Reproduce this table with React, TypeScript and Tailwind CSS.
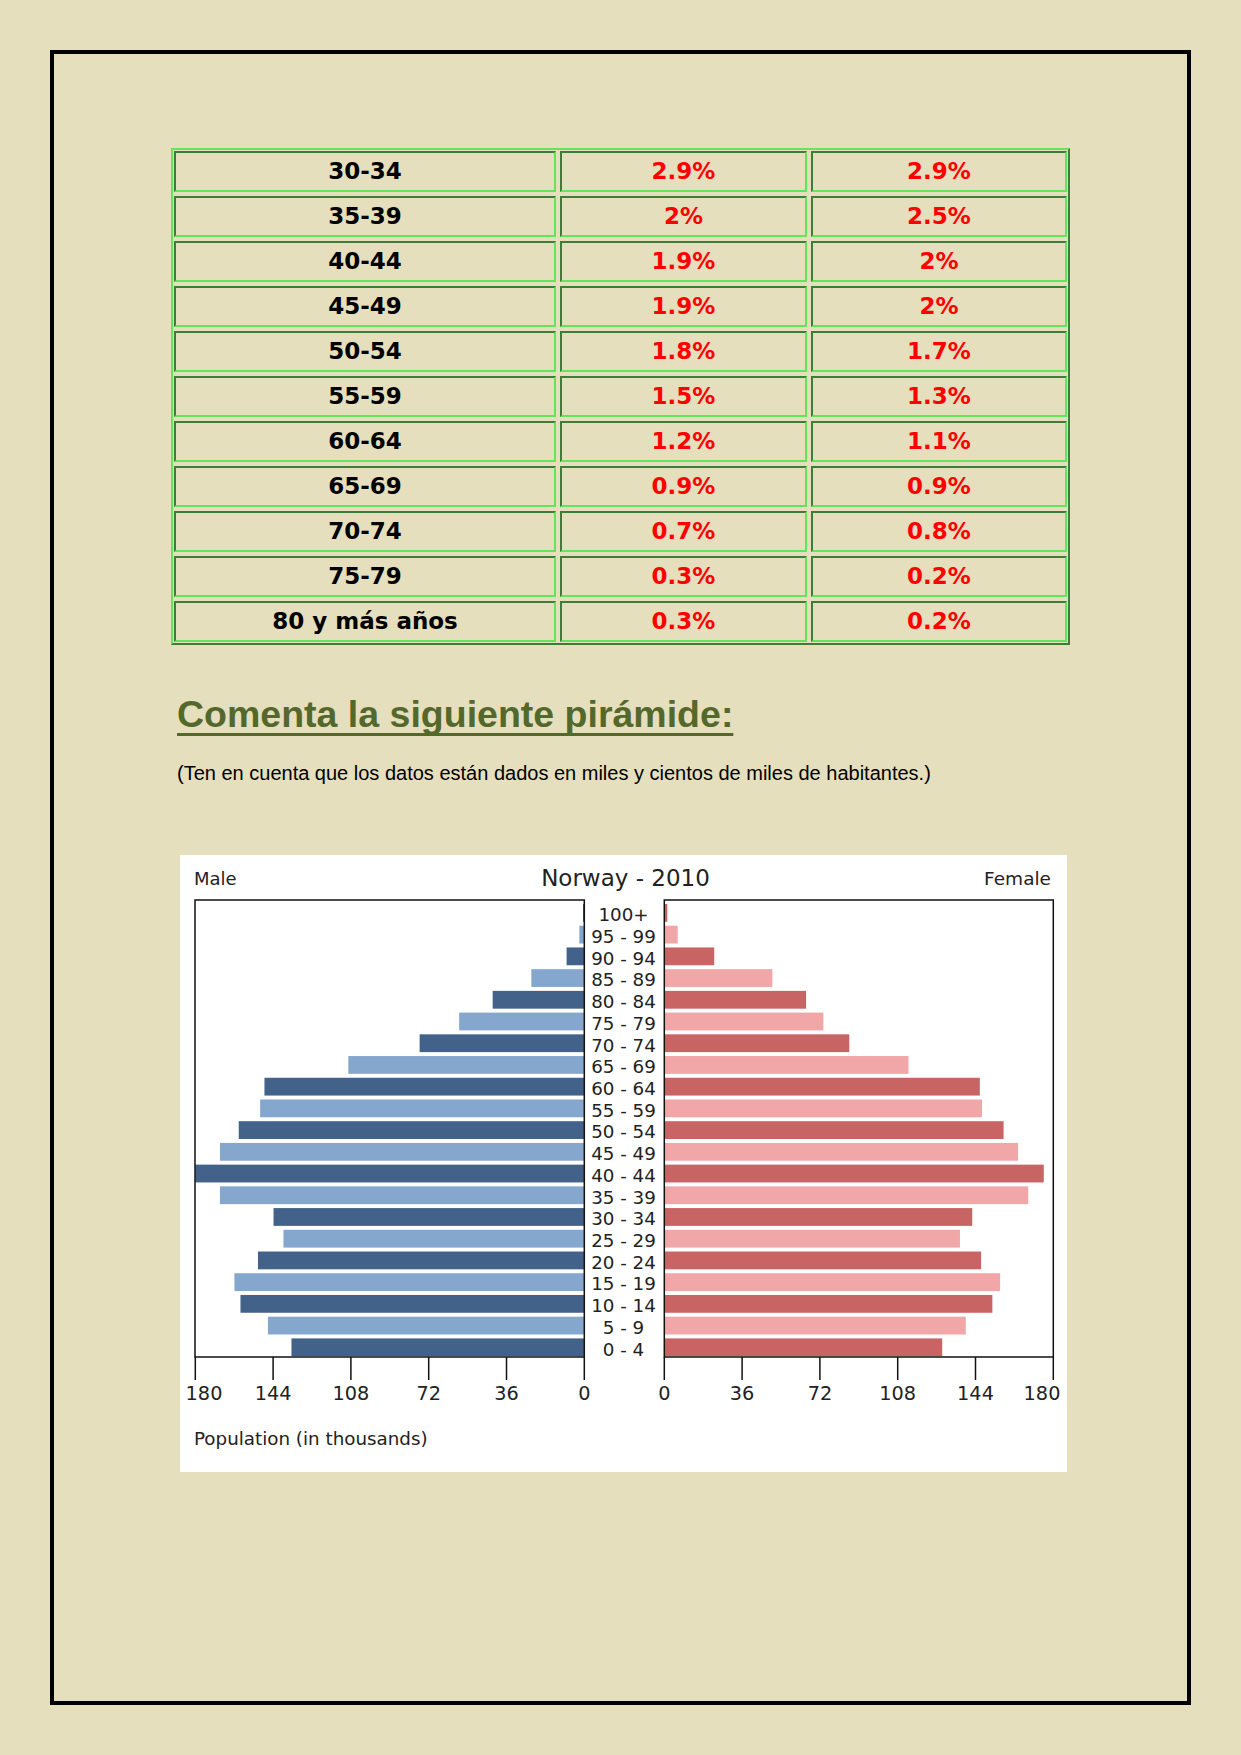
const rows = [
  ["30-34", "2.9%", "2.9%"],
  ["35-39", "2%", "2.5%"],
  ["40-44", "1.9%", "2%"],
  ["45-49", "1.9%", "2%"],
  ["50-54", "1.8%", "1.7%"],
  ["55-59", "1.5%", "1.3%"],
  ["60-64", "1.2%", "1.1%"],
  ["65-69", "0.9%", "0.9%"],
  ["70-74", "0.7%", "0.8%"],
  ["75-79", "0.3%", "0.2%"],
  ["80 y más años", "0.3%", "0.2%"],
];

const ages = [
  "100+", "95 - 99", "90 - 94", "85 - 89", "80 - 84", "75 - 79", "70 - 74",
  "65 - 69", "60 - 64", "55 - 59", "50 - 54", "45 - 49", "40 - 44", "35 - 39",
  "30 - 34", "25 - 29", "20 - 24", "15 - 19", "10 - 14", "5 - 9", "0 - 4",
];

// thousands, read off the chart
const male = [0.6, 2.3, 8.2, 24.5, 42.4, 57.9, 76.2, 109.2, 148, 150, 159.9, 168.6, 181, 168.6, 143.8, 139.2, 151, 161.9, 159.1, 146.4, 135.5];
const female = [1.4, 6.2, 23.1, 50, 65.6, 73.6, 85.6, 113, 146, 147, 157, 163.7, 175.6, 168.4, 142.5, 136.8, 146.6, 155.4, 151.8, 139.5, 128.6];

function Cell({ children, red }: { children: string; red?: boolean }) {
  return (
    <div
      className={`flex h-[41px] items-center justify-center border-2 border-t-[#3d7d3a] border-l-[#3d7d3a] border-b-[#62e55a] border-r-[#62e55a] font-['DejaVu_Sans',sans-serif] text-[23px] font-bold ${
        red ? "text-[#ff0000]" : "text-black"
      }`}
    >
      {children}
    </div>
  );
}

function Pyramid() {
  const L0 = 404.3; // male zero line
  const R0 = 484.3; // female zero line
  const k = 389 / 180;
  const top = 49;
  const pitch = 21.72;
  const ticks = [0, 36, 72, 108, 144, 180];
  const font = "DejaVu Sans, Verdana, sans-serif";

  return (
    <svg width="887" height="617" viewBox="0 0 887 617" className="block">
      <text x="14" y="30" fontFamily={font} fontSize="18" fill="#222">Male</text>
      <text x="445.5" y="30.5" fontFamily={font} fontSize="23" fill="#222" textAnchor="middle">Norway - 2010</text>
      <text x="871" y="30" fontFamily={font} fontSize="18.5" fill="#222" textAnchor="end">Female</text>

      {ages.map((age, i) => {
        const y = top + i * pitch;
        const dark = i % 2 === 0;
        const m = Math.min(male[i], 180) * k;
        const f = Math.min(female[i], 180) * k;
        return (
          <g key={age}>
            <rect x={L0 - m} y={y} width={m} height={17.8} fill={dark ? "#43628a" : "#86a7cd"} />
            <rect x={R0} y={y} width={f} height={17.8} fill={dark ? "#c96464" : "#f1a6a8"} />
            <text x="443.5" y={y + 17.2} fontFamily={font} fontSize="18.3" fill="#222" textAnchor="middle">
              {age}
            </text>
          </g>
        );
      })}

      <rect x="15" y="45" width={L0 - 15} height="457" fill="none" stroke="#111" strokeWidth="1.5" />
      <rect x={R0} y="45" width="389" height="457" fill="none" stroke="#111" strokeWidth="1.5" />

      {ticks.map((t) => {
        const xl = L0 - t * k;
        const xr = R0 + t * k;
        const cl = t === 180 ? 24 : xl;
        const cr = t === 180 ? 862 : xr;
        return (
          <g key={t}>
            <line x1={xl} y1="502" x2={xl} y2="525" stroke="#111" strokeWidth="1.5" />
            <line x1={xr} y1="502" x2={xr} y2="525" stroke="#111" strokeWidth="1.5" />
            <text x={cl} y="544.5" fontFamily={font} fontSize="19.3" fill="#222" textAnchor="middle">{t}</text>
            <text x={cr} y="544.5" fontFamily={font} fontSize="19.3" fill="#222" textAnchor="middle">{t}</text>
          </g>
        );
      })}

      <text x="14" y="589.5" fontFamily={font} fontSize="18.3" fill="#222">Population (in thousands)</text>
    </svg>
  );
}

export default function App() {
  return (
    <div className="h-[1755px] w-[1241px] bg-[#e5dfbd] pl-[50px] pt-[50px]">
      <div className="h-[1655px] w-[1141px] border-[4px] border-black pl-[117px] pt-[94px]">
        <div className="inline-grid grid-cols-[382px_247px_256px] gap-[4px] border-2 border-t-[#62e55a] border-l-[#62e55a] border-b-[#3d7d3a] border-r-[#3d7d3a] p-px">
          {rows.map(([age, a, b]) => (
            <div key={age} className="contents">
              <Cell>{age}</Cell>
              <Cell red>{a}</Cell>
              <Cell red>{b}</Cell>
            </div>
          ))}
        </div>

        <h2 className="ml-[6px] mt-[47px] font-['Liberation_Sans',Arial,sans-serif] text-[37.5px] font-bold leading-[44px] text-[#55682c] underline decoration-[3px] underline-offset-[6px] [text-decoration-skip-ink:none]">
          Comenta la siguiente pirámide:
        </h2>

        <p className="ml-[6px] mt-[25px] font-['Liberation_Sans',Arial,sans-serif] text-[20px] leading-[24px] text-black">
          (Ten en cuenta que los datos están dados en miles y cientos de miles de habitantes.)
        </p>

        <div className="ml-[9px] mt-[70px] w-[887px] bg-white">
          <Pyramid />
        </div>
      </div>
    </div>
  );
}
